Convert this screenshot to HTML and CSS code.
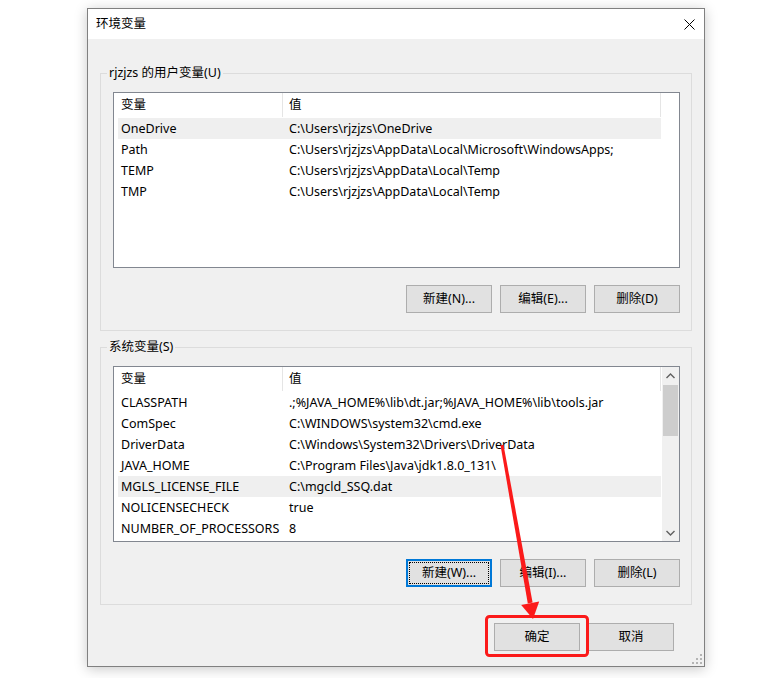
FILE: index.html
```html
<!DOCTYPE html>
<html lang="zh-CN">
<head>
	<meta charset="utf-8" />
	<title>环境变量</title>
	<link rel="stylesheet" href="styles.css">
</head>
<body>
	<div class="page">
		<div class="window">
			<div class="titlebar">
				<span class="title">环境变量</span>
				<span class="close">
					<svg width="11" height="11" viewBox="0 0 11 11"><path d="M0.5 0.5L10.5 10.5M10.5 0.5L0.5 10.5" stroke="#000" stroke-width="1" fill="none"/></svg>
				</span>
			</div>

			<div class="content">
				<fieldset class="group">
					<legend>rjzjzs 的用户变量(U)</legend>
					<div class="listview">
						<div class="list-main">
							<div class="list-head">
								<div class="head-cell">变量</div>
								<div class="head-cell">值</div>
							</div>
							<div class="row hot"><span>OneDrive</span><span>C:\Users\rjzjzs\OneDrive</span></div>
							<div class="row"><span>Path</span><span>C:\Users\rjzjzs\AppData\Local\Microsoft\WindowsApps;</span></div>
							<div class="row"><span>TEMP</span><span>C:\Users\rjzjzs\AppData\Local\Temp</span></div>
							<div class="row"><span>TMP</span><span>C:\Users\rjzjzs\AppData\Local\Temp</span></div>
						</div>
					</div>
					<div class="buttons">
						<button>新建(N)...</button>
						<button>编辑(E)...</button>
						<button>删除(D)</button>
					</div>
				</fieldset>

				<fieldset class="group system">
					<legend>系统变量(S)</legend>
					<div class="listview">
						<div class="list-main">
							<div class="list-head">
								<div class="head-cell">变量</div>
								<div class="head-cell">值</div>
							</div>
							<div class="row"><span>CLASSPATH</span><span>.;%JAVA_HOME%\lib\dt.jar;%JAVA_HOME%\lib\tools.jar</span></div>
							<div class="row"><span>ComSpec</span><span>C:\WINDOWS\system32\cmd.exe</span></div>
							<div class="row"><span>DriverData</span><span>C:\Windows\System32\Drivers\DriverData</span></div>
							<div class="row"><span>JAVA_HOME</span><span>C:\Program Files\Java\jdk1.8.0_131\</span></div>
							<div class="row hot"><span>MGLS_LICENSE_FILE</span><span>C:\mgcld_SSQ.dat</span></div>
							<div class="row"><span>NOLICENSECHECK</span><span>true</span></div>
							<div class="row"><span>NUMBER_OF_PROCESSORS</span><span>8</span></div>
						</div>
						<div class="scrollbar">
							<div class="arrow">
								<svg width="9" height="6" viewBox="0 0 9 6"><path d="M0.5 5L4.5 1L8.5 5" stroke="#606060" stroke-width="1.4" fill="none"/></svg>
							</div>
							<div class="thumb"></div>
							<div class="track"></div>
							<div class="arrow">
								<svg width="9" height="6" viewBox="0 0 9 6"><path d="M0.5 1L4.5 5L8.5 1" stroke="#606060" stroke-width="1.4" fill="none"/></svg>
							</div>
						</div>
					</div>
					<div class="buttons">
						<button class="focused">新建(W)...</button>
						<button>编辑(I)...</button>
						<button>删除(L)</button>
					</div>
				</fieldset>

				<div class="dialog-buttons">
					<button>确定</button>
					<button>取消</button>
				</div>
			</div>

			<svg class="grip" width="10" height="10" viewBox="0 0 10 10">
				<rect x="8" y="0" width="2" height="2" fill="#b4b4b4"/>
				<rect x="4" y="4" width="2" height="2" fill="#b4b4b4"/>
				<rect x="8" y="4" width="2" height="2" fill="#b4b4b4"/>
				<rect x="0" y="8" width="2" height="2" fill="#b4b4b4"/>
				<rect x="4" y="8" width="2" height="2" fill="#b4b4b4"/>
				<rect x="8" y="8" width="2" height="2" fill="#b4b4b4"/>
			</svg>
		</div>

		<!-- red markup drawn over the screenshot -->
		<svg class="annotation" width="770" height="678" viewBox="0 0 770 678">
			<polygon points="500.5,445.3 503.5,444.7 532.6,602.6 527.8,603.5" fill="#fb1a1a"/>
			<polygon points="521.2,605 539.2,601.6 533,619" fill="#fb1a1a"/>
			<rect x="486.5" y="616.5" width="101" height="39" rx="3" ry="3" fill="none" stroke="#fb1a1a" stroke-width="3"/>
		</svg>
	</div>
</body>
</html>
```

FILE: styles.css
```css
body
{
	margin: 0;
	background-color: #ffffff;
	font-family: "Noto Sans", "Noto Sans CJK SC", sans-serif;
	font-size: 12.5px;
	line-height: 16px;
	color: #000000;
}

.page
{
	position: relative;
	width: 770px;
	height: 678px;
	padding: 8px 0 0 87px;
	box-sizing: border-box;
}

.window
{
	position: relative;
	width: 618px;
	height: 659px;
	box-sizing: border-box;
	border: 1px solid #808080;
	background-color: #f0f0f0;
	box-shadow: 0 2px 12px rgba(0,0,0,0.22);
}

.titlebar
{
	height: 30px;
	background-color: #ffffff;
	display: flex;
	align-items: center;
	justify-content: space-between;
	padding-left: 8px;
}

.close
{
	width: 30px;
	height: 30px;
	display: flex;
	align-items: center;
	justify-content: center;
}

.content
{
	padding: 26px 12px 0 12px;
}

.group
{
	margin: 0;
	min-width: 0;
	padding: 11px 11px 17px 12px;
	border: 1px solid #dcdcdc;
}

.group legend
{
	padding: 0 2px;
	margin-left: -6px;
	line-height: 16px;
}

.system
{
	margin-top: 8px;
}

.listview
{
	height: 176px;
	box-sizing: border-box;
	border: 1px solid #828790;
	background-color: #ffffff;
	display: flex;
}

.list-main
{
	width: 548px;
	overflow: hidden;
}

.list-head
{
	display: grid;
	grid-template-columns: 169px 378px;
	height: 25px;
}

.head-cell
{
	border-right: 1px solid #e5e5e5;
	padding-left: 7px;
	line-height: 24px;
	height: 24px;
}

.head-cell + .head-cell
{
	padding-left: 6px;
}

.row
{
	display: grid;
	grid-template-columns: 165px 378px;
	margin-left: 4px;
	width: 543px;
	height: 21px;
	line-height: 21px;
	white-space: nowrap;
}

.row span
{
	overflow: hidden;
	padding-left: 3px;
}

.row span + span
{
	padding-left: 6px;
}

.hot
{
	background-color: #efefef;
}

.scrollbar
{
	margin-left: auto;
	width: 17px;
	background-color: #f0f0f0;
	display: flex;
	flex-direction: column;
}

.arrow
{
	height: 17px;
	display: flex;
	align-items: center;
	justify-content: center;
}

.thumb
{
	height: 51px;
	margin: 1px 1px 0 1px;
	background-color: #cdcdcd;
}

.track
{
	flex: 1;
}

.buttons
{
	display: flex;
	justify-content: flex-end;
	gap: 8px;
	margin-top: 17px;
}

button
{
	font: inherit;
	color: #000000;
	width: 86px;
	height: 28px;
	padding: 0;
	background-color: #e1e1e1;
	border: 1px solid #adadad;
}

.focused
{
	border: 2px solid #0078d7;
	outline: 1px dotted #000000;
	outline-offset: -4px;
}

.dialog-buttons
{
	display: flex;
	justify-content: flex-end;
	gap: 8px;
	margin-top: 18px;
	padding-right: 18px;
}

.grip
{
	position: absolute;
	right: 2px;
	bottom: 2px;
}

.annotation
{
	position: absolute;
	left: 0;
	top: 0;
	pointer-events: none;
}
```
